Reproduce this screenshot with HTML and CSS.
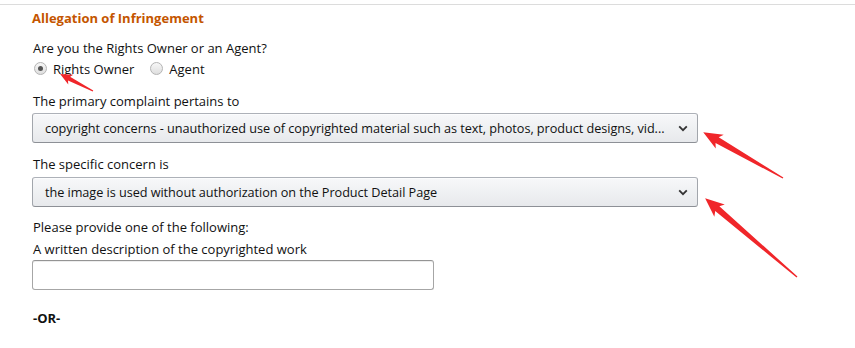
FILE: index.html
```html
<!DOCTYPE html>
<html>
<head>
<meta charset="utf-8">
<link rel="stylesheet" href="styles.css">
</head>
<body>
<div class="page">
  <div class="rule"></div>
  <section class="form">
    <h2 class="heading">Allegation of Infringement</h2>
    <div class="label l-q">Are you the Rights Owner or an Agent?</div>
    <div class="radios">
      <label class="radio"><span class="dot checked"></span><span>Rights Owner</span></label>
      <label class="radio"><span class="dot"></span><span>Agent</span></label>
    </div>
    <div class="label l-primary">The primary complaint pertains to</div>
    <div class="select s1">
      <span class="select-text">copyright concerns - unauthorized use of copyrighted material such as text, photos, product designs, vid...</span>
      <svg class="chev" width="10" height="7" viewBox="0 0 10 7"><path d="M1.2 1.3 L5 5.2 L8.8 1.3" fill="none" stroke="#333" stroke-width="1.8"/></svg>
    </div>
    <div class="label l-specific">The specific concern is</div>
    <div class="select s2">
      <span class="select-text">the image is used without authorization on the Product Detail Page</span>
      <svg class="chev" width="10" height="7" viewBox="0 0 10 7"><path d="M1.2 1.3 L5 5.2 L8.8 1.3" fill="none" stroke="#333" stroke-width="1.8"/></svg>
    </div>
    <div class="label l-provide">Please provide one of the following:</div>
    <div class="label l-written">A written description of the copyrighted work</div>
    <div class="input"></div>
    <div class="or">-OR-</div>
  </section>
  <svg class="arrows" width="855" height="348" viewBox="0 0 855 348">
    <g fill="#f0262a">
      <g transform="translate(93 91) rotate(207.3)">
        <polygon points="0,-0.6 27,-2.2 25,-5.5 37,0 25,5.5 27,2.2 0,0.6"/>
      </g>
      <g transform="translate(783 178) rotate(209.9)">
        <polygon points="0,-0.7 76,-3.2 73,-8 92,0 73,8 76,3.2 0,0.7"/>
      </g>
      <g transform="translate(797 277) rotate(220.6)">
        <polygon points="0,-0.7 105,-3.2 102,-8 121,0 102,8 105,3.2 0,0.7"/>
      </g>
    </g>
  </svg>
</div>
</body>
</html>
```
FILE: styles.css
```css
* { box-sizing: border-box; }
html, body { margin: 0; padding: 0; background: #fff; }
body {
  font-family: "Open Sans", "Noto Sans", sans-serif;
  font-size: 13px;
  color: #111;
}
.page { position: relative; width: 855px; height: 348px; overflow: hidden; }
.rule { height: 5px; border-bottom: 1px solid #dcdcdc; }
.form { padding-left: 32px; display: flex; flex-direction: column; align-items: flex-start; }
.heading {
  margin: 4px 0 0 0;
  font-size: 13px;
  font-weight: bold;
  line-height: 19px;
  color: #c45500;
}
.label { line-height: 19px; margin-left: 1px; }
.l-q { margin-top: 11px; }
.radios { display: flex; margin-top: 1px; height: 19px; align-items: center; }
.radio { display: flex; align-items: center; gap: 6px; margin-right: 14px; cursor: default; }
.dot {
  width: 13px; height: 13px; border-radius: 50%;
  border: 1px solid #b4b4b4;
  background: linear-gradient(#f7f7f7, #dedede);
  display: flex; align-items: center; justify-content: center;
  margin-left: 2px;
}
.dot.checked::after {
  content: ""; width: 5px; height: 5px; border-radius: 50%; background: #555;
}
.l-primary { margin-top: 14px; }
.select {
  width: 666px; height: 30px;
  border: 1px solid #adb1b8;
  border-color: #adb1b8 #a2a6ac #8d9096;
  border-radius: 3px;
  background: linear-gradient(#f7f8fa, #e7e9ec);
  box-shadow: 0 1px 0 rgba(255,255,255,.6) inset;
  display: flex; align-items: center; justify-content: space-between;
  padding: 0 9px 0 12px;
  color: #111;
}
.select-text { white-space: nowrap; font-size: 12.7px; letter-spacing: -0.05px; }
.s1 { margin-top: 2px; }
.s2 { margin-top: 3px; }
.l-specific { margin-top: 12px; }
.l-provide { margin-top: 11px; }
.l-written { margin-top: 3px; }
.input {
  width: 402px; height: 30px; margin-top: 1px;
  border: 1px solid #a6a6a6; border-top-color: #949494;
  border-radius: 3px;
  box-shadow: 0 1px 0 rgba(255,255,255,.5), 0 1px 0 rgba(0,0,0,.07) inset;
  background: #fff;
}
.or { margin-top: 19px; font-weight: bold; line-height: 19px; margin-left: 1px; }
.arrows { position: absolute; left: 0; top: 0; pointer-events: none; }
```
